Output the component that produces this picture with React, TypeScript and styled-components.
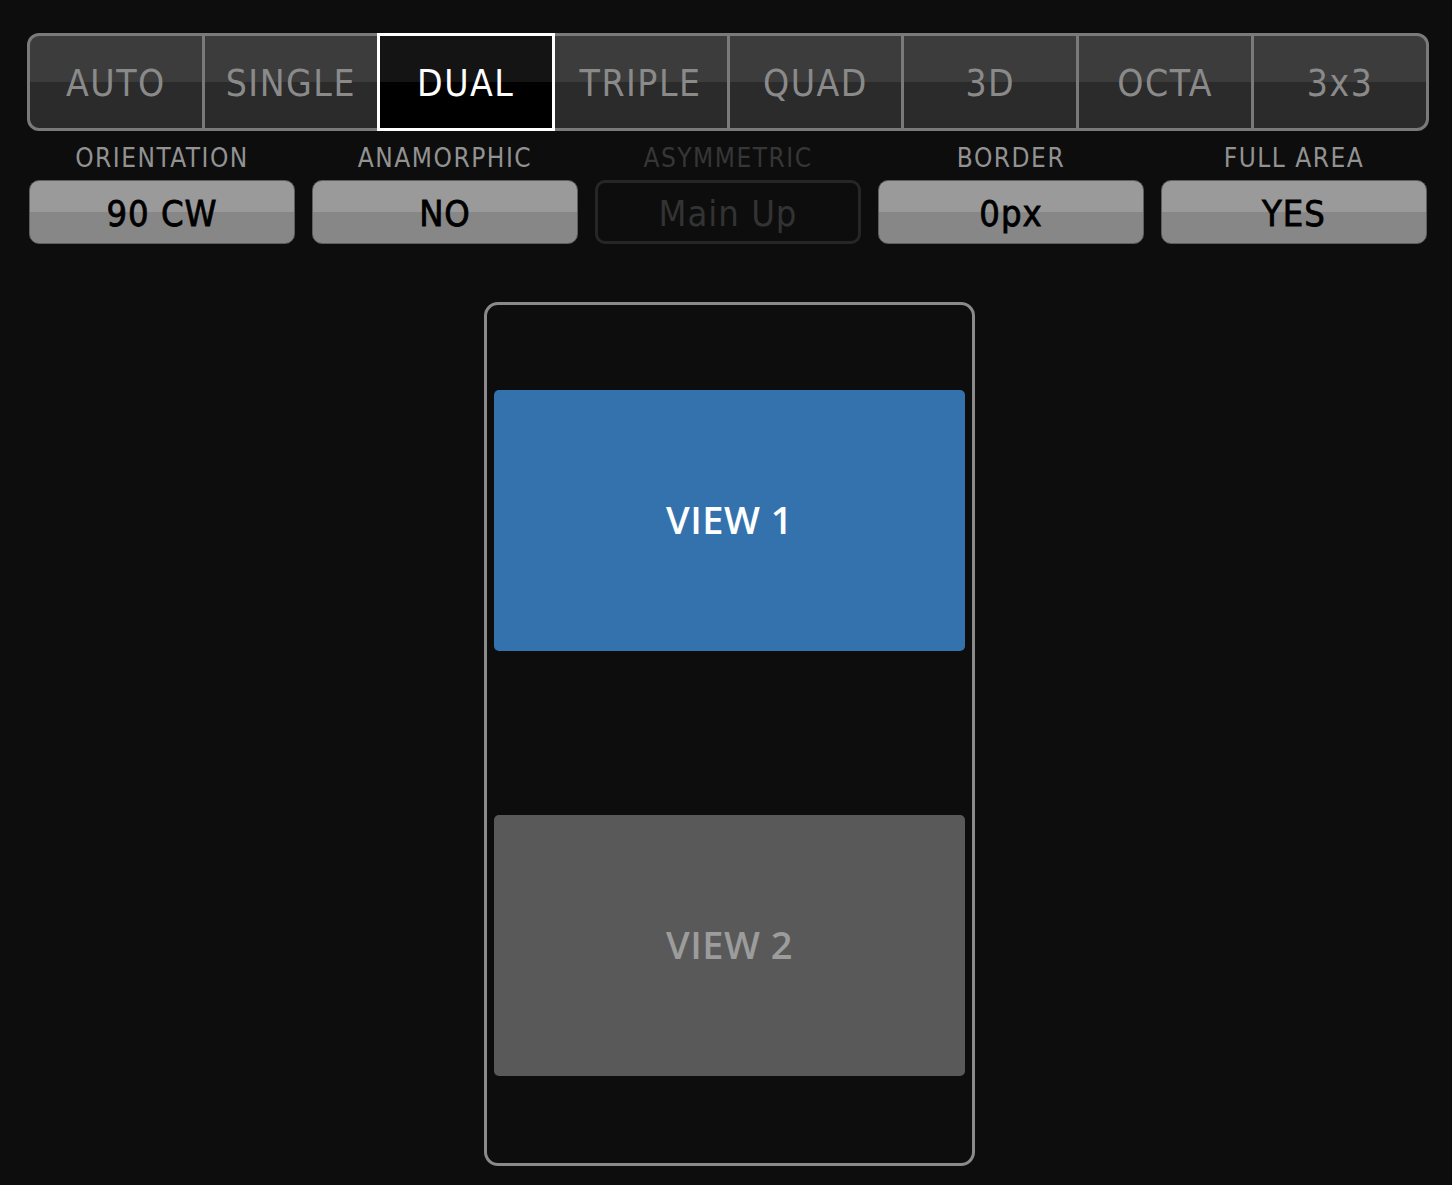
import styled, { createGlobalStyle } from "styled-components";

const GlobalStyle = createGlobalStyle`
  html, body {
    margin: 0;
    padding: 0;
    background: #0d0d0d;
  }
  body {
    font-family: "DejaVu Sans Condensed", "DejaVu Sans", sans-serif;
  }
`;

const modes = ["AUTO", "SINGLE", "DUAL", "TRIPLE", "QUAD", "3D", "OCTA", "3x3"];

const settings = [
  { label: "ORIENTATION", value: "90 CW" },
  { label: "ANAMORPHIC", value: "NO" },
  { label: "ASYMMETRIC", value: "Main Up", disabled: true },
  { label: "BORDER", value: "0px" },
  { label: "FULL AREA", value: "YES" },
];

const App = () => {
  return (
    <Page>
      <GlobalStyle />
      <Panel>
        <TabBar>
          {modes.map((m) => (
            <Tab key={m} $active={m === "DUAL"}>
              {m}
            </Tab>
          ))}
        </TabBar>
        <SettingsRow>
          {settings.map((s) => (
            <Setting key={s.label}>
              <Label $disabled={s.disabled}>{s.label}</Label>
              <ValueButton $disabled={s.disabled}>{s.value}</ValueButton>
            </Setting>
          ))}
        </SettingsRow>
        <Preview>
          <Screen>
            <View $main>VIEW 1</View>
            <View>VIEW 2</View>
          </Screen>
        </Preview>
      </Panel>
    </Page>
  );
};

export default App;

const Page = styled.div`
  min-height: 1185px;
  padding: 33px 23px 0 27px;
  box-sizing: border-box;
`;

const Panel = styled.div`
  width: 1402px;
`;

const TabBar = styled.div`
  display: flex;
  height: 98px;
`;

const Tab = styled.div<{ $active?: boolean }>`
  position: relative;
  flex: 1;
  display: flex;
  align-items: center;
  justify-content: center;
  box-sizing: border-box;
  border: 3px solid ${({ $active }) => ($active ? "#ffffff" : "#7a7a7a")};
  background: ${({ $active }) =>
    $active
      ? "linear-gradient(#141414 50%, #000 50%)"
      : "linear-gradient(#3c3c3c 50%, #2b2b2b 50%)"};
  color: ${({ $active }) => ($active ? "#ffffff" : "#8a8a8a")};
  z-index: ${({ $active }) => ($active ? 1 : 0)};
  font-size: 37px;
  letter-spacing: 1.5px;
  padding-top: 2px;

  & + & {
    margin-left: -3px;
  }
  &:first-child {
    border-radius: 12px 0 0 12px;
  }
  &:last-child {
    border-radius: 0 12px 12px 0;
  }
`;

const SettingsRow = styled.div`
  display: flex;
  justify-content: space-between;
  margin: 12px 2px 0;
`;

const Setting = styled.div`
  width: 266px;
  display: flex;
  flex-direction: column;
  align-items: center;
  gap: 7px;
`;

const Label = styled.div<{ $disabled?: boolean }>`
  height: 30px;
  line-height: 30px;
  font-size: 26px;
  letter-spacing: 1.5px;
  color: ${({ $disabled }) => ($disabled ? "#363636" : "#929292")};
`;

const ValueButton = styled.div<{ $disabled?: boolean }>`
  width: 100%;
  height: 64px;
  box-sizing: border-box;
  border-radius: 10px;
  display: flex;
  align-items: center;
  justify-content: center;
  padding-top: 2px;
  font-size: 36px;
  letter-spacing: 1px;
  color: ${({ $disabled }) => ($disabled ? "#333333" : "#000000")};
  -webkit-text-stroke: ${({ $disabled }) => ($disabled ? "0" : "0.8px #000")};
  border: ${({ $disabled }) =>
    $disabled ? "3px solid #262626" : "1px solid #5e5e5e"};
  background: ${({ $disabled }) =>
    $disabled ? "transparent" : "linear-gradient(#9a9a9a 50%, #878787 50%)"};
`;

const Preview = styled.div`
  display: flex;
  justify-content: center;
  margin-top: 58px;
  padding-left: 3px;
`;

const Screen = styled.div`
  width: 491px;
  height: 864px;
  box-sizing: border-box;
  border: 3px solid #8a8a8a;
  border-radius: 14px;
  padding: 85px 7px 87px;
  display: flex;
  flex-direction: column;
  justify-content: space-between;
`;

const View = styled.div<{ $main?: boolean }>`
  height: 261px;
  box-sizing: border-box;
  padding-bottom: 4px;
  border-radius: 5px;
  display: flex;
  align-items: center;
  justify-content: center;
  font-family: "Open Sans", sans-serif;
  font-weight: 600;
  font-size: 38px;
  letter-spacing: 0.5px;
  background: ${({ $main }) => ($main ? "#3472ae" : "#595959")};
  color: ${({ $main }) => ($main ? "#ffffff" : "#9c9c9c")};
`;
